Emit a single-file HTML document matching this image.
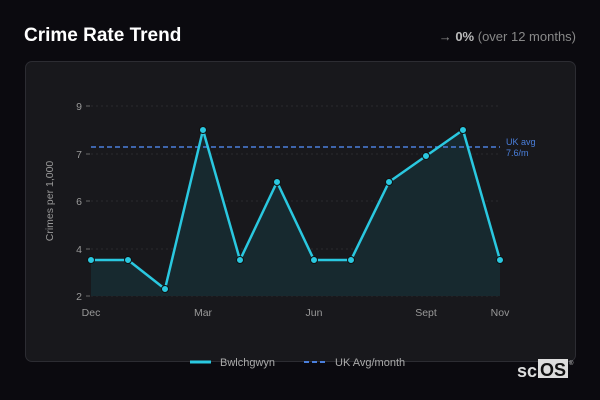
<!DOCTYPE html>
<html><head><meta charset="utf-8"><style>
html,body{margin:0;padding:0;width:600px;height:400px;background:#0b0a0f;overflow:hidden;font-family:"Liberation Sans",sans-serif;}
.t{position:absolute;left:24px;top:25px;color:#fff;font-size:19px;font-weight:bold;}
.r{position:absolute;right:24px;top:29px;color:#888;font-size:13px}
.r b{color:#bbb}
.card{position:absolute;left:25px;top:61px;width:549px;height:299px;background:#18181c;border:1px solid #2c2c32;border-radius:7px}
svg{position:absolute;left:0;top:0}
</style></head><body>
<div class="t">Crime Rate Trend</div>
<div class="r">→ <b>0%</b> (over 12 months)</div>
<div class="card"></div>
<svg width="600" height="400" font-family="Liberation Sans, sans-serif">
<g stroke="#2a2a2e" stroke-dasharray="2,3" stroke-width="1">
<line x1="91" y1="106" x2="500" y2="106"/><line x1="91" y1="154" x2="500" y2="154"/><line x1="91" y1="201" x2="500" y2="201"/><line x1="91" y1="249" x2="500" y2="249"/><line x1="91" y1="296" x2="500" y2="296"/>
</g>
<g stroke="#666"><line x1="86" y1="106" x2="90" y2="106"/><line x1="86" y1="154" x2="90" y2="154"/><line x1="86" y1="201" x2="90" y2="201"/><line x1="86" y1="249" x2="90" y2="249"/><line x1="86" y1="296" x2="90" y2="296"/></g>
<g fill="#999" font-size="10.5" text-anchor="end">
<text x="82" y="110">9</text><text x="82" y="158">7</text><text x="82" y="205">6</text><text x="82" y="253">4</text><text x="82" y="300">2</text></g>
<text transform="translate(53,201) rotate(-90)" fill="#999" font-size="10.5" text-anchor="middle">Crimes per 1,000</text>
<g fill="#999" font-size="10.5" text-anchor="middle">
<text x="91" y="316">Dec</text><text x="203" y="316">Mar</text><text x="314" y="316">Jun</text><text x="426" y="316">Sept</text><text x="500" y="316">Nov</text></g>
<path d="M91,260 L128,260 L165,289 L203,130 L240,260 L277,182 L314,260 L351,260 L389,182 L426,156 L463,130 L500,260 L500,296 L91,296Z" fill="#17292f"/>
<line x1="91" y1="147" x2="500" y2="147" stroke="#4a7fdc" stroke-width="1.5" stroke-dasharray="5,3"/>
<text x="506" y="145" fill="#4a7fdc" font-size="9">UK avg</text>
<text x="506" y="156" fill="#4a7fdc" font-size="9">7.6/m</text>
<polyline points="91,260 128,260 165,289 203,130 240,260 277,182 314,260 351,260 389,182 426,156 463,130 500,260" fill="none" stroke="#2ac8e0" stroke-width="2.5" stroke-linejoin="round"/>
<g fill="#2ac8e0" stroke="#111" stroke-width="1">
<circle cx="91" cy="260" r="3.5"/><circle cx="128" cy="260" r="3.5"/><circle cx="165" cy="289" r="3.5"/><circle cx="203" cy="130" r="3.5"/><circle cx="240" cy="260" r="3.5"/><circle cx="277" cy="182" r="3.5"/><circle cx="314" cy="260" r="3.5"/><circle cx="351" cy="260" r="3.5"/><circle cx="389" cy="182" r="3.5"/><circle cx="426" cy="156" r="3.5"/><circle cx="463" cy="130" r="3.5"/><circle cx="500" cy="260" r="3.5"/></g>
<line x1="190" y1="362" x2="211" y2="362" stroke="#2ac8e0" stroke-width="3"/>
<text x="220" y="366" fill="#aaa" font-size="11">Bwlchgwyn</text>
<line x1="304" y1="362" x2="326" y2="362" stroke="#4a7fdc" stroke-width="2" stroke-dasharray="5,3"/>
<text x="335" y="366" fill="#aaa" font-size="11">UK Avg/month</text>
<text x="517" y="377" fill="#ddd" font-size="18" font-weight="bold">sc</text>
<rect x="538" y="359" width="30" height="19" fill="#ddd"/>
<text x="540" y="376" fill="#111" font-size="18" font-weight="bold">OS</text>
<text x="569" y="365" fill="#ccc" font-size="6">®</text>
</svg>
</body></html>
